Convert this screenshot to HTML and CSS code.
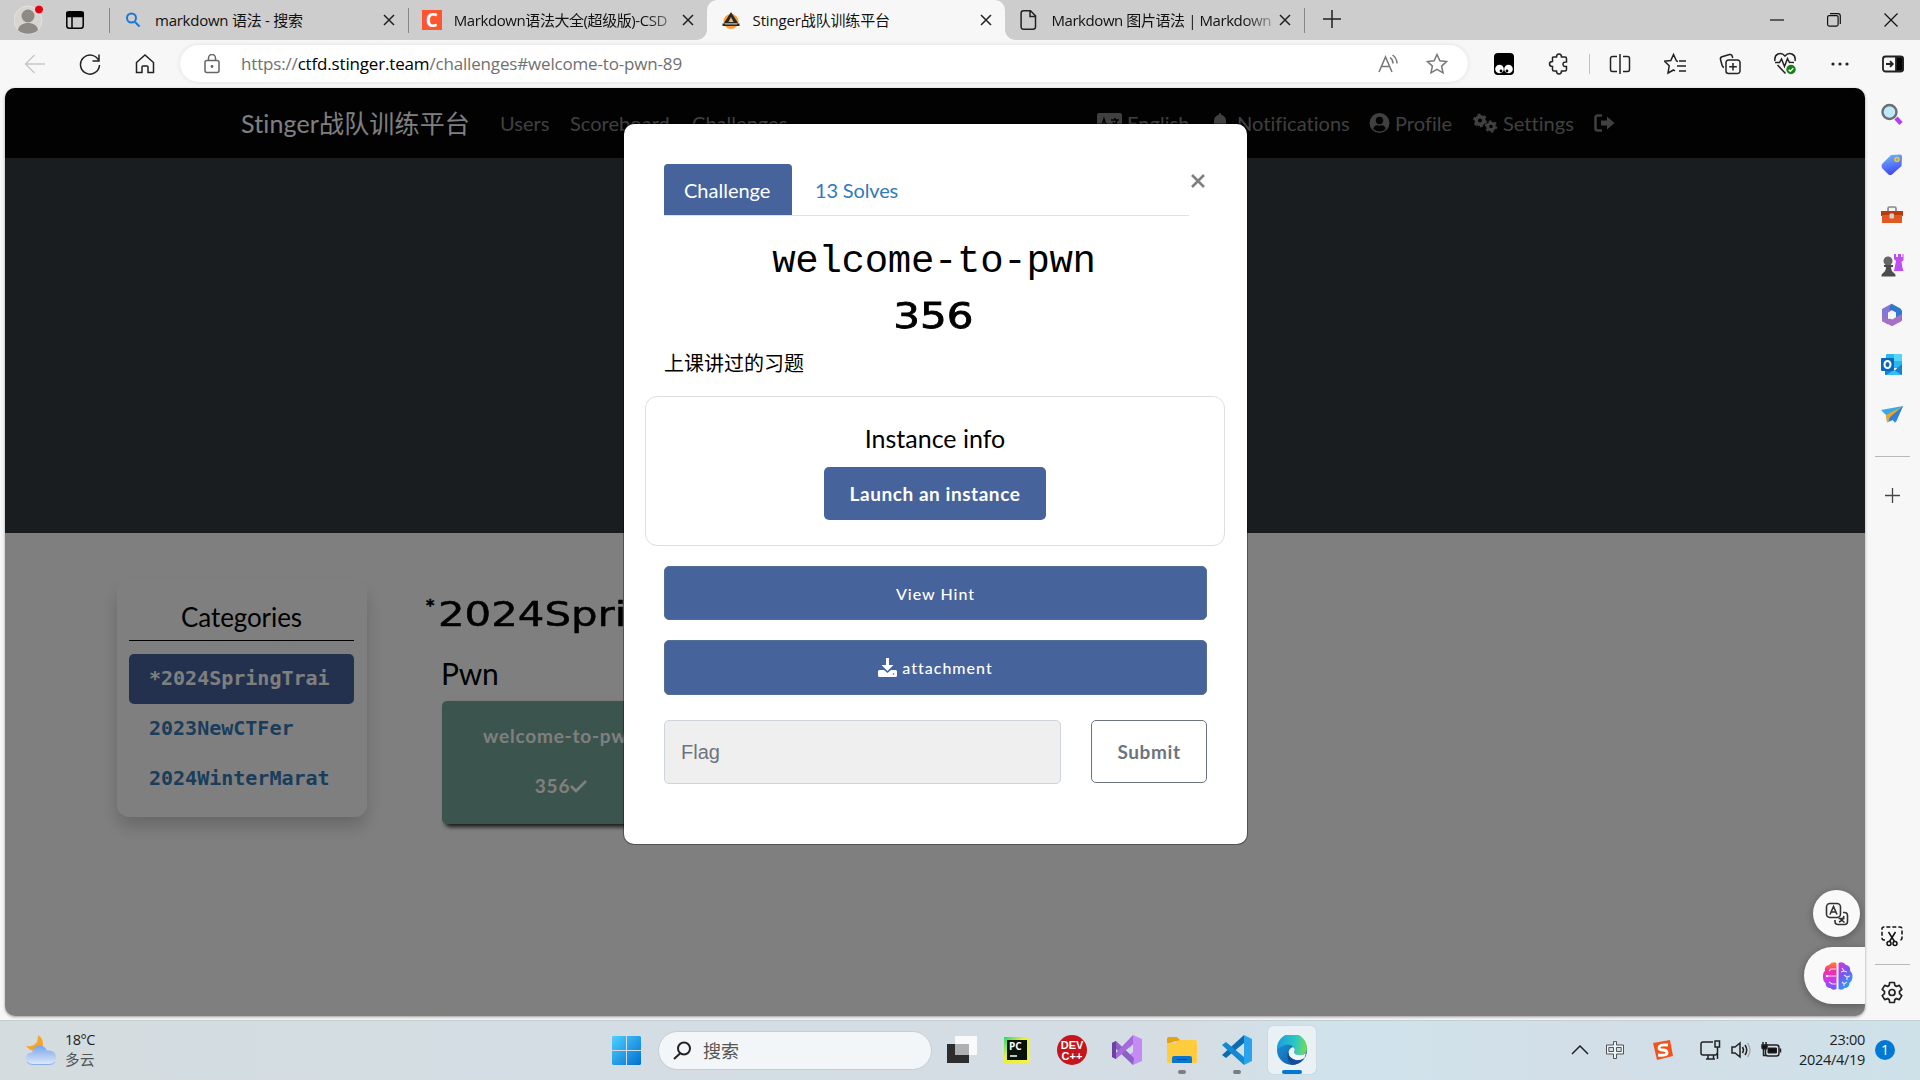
FILE: index.html
```html
<!DOCTYPE html>
<html lang="zh-CN">
<head>
<meta charset="utf-8">
<title>Stinger战队训练平台</title>
<link rel="stylesheet" href="styles.css">
</head>
<body>
<header class="tabbar">
  <svg class="avatar" width="30" height="30" viewBox="0 0 30 30"><circle cx="14" cy="15" r="14" fill="#d8d4cf" stroke="#e6e2dd"/><circle cx="14" cy="11" r="6.500" fill="#8d8985"/><path d="M4 25c1-5 5-7 10-7s9 2 10 7c-5 5-15 5-20 0z" fill="#8d8985"/><circle cx="25" cy="4.500" r="4.500" fill="#e3000f" stroke="#f3e5e5"/></svg>
  <svg class="workspaces" width="18" height="18" viewBox="0 0 18 18" fill="none" stroke="#000" stroke-width="1.500"><rect x=".8" y=".8" width="16.400" height="16.400" rx="2.500"/><path d="M1 1.500h16v4H1z" fill="#000"/><path d="M6 5v12"/></svg>
  <div class="tab divided">
    <svg class="fav" width="20" height="20" viewBox="0 0 20 20" fill="none" stroke="#1a78d0" stroke-width="2"><circle cx="8.500" cy="8" r="4.500"/><path d="m12 12 4.500 4.500"/></svg>
    <span class="tab-title t1">markdown 语法 - 搜索</span>
    <svg class="close" width="12" height="12" viewBox="0 0 12 12"><path d="m1 1 10 10M11 1 1 11"/></svg>
  </div>
  <div class="tab divided">
    <span class="fav csdn">C</span>
    <span class="tab-title fade">Markdown语法大全(超级版)-CSD</span>
    <svg class="close" width="12" height="12" viewBox="0 0 12 12"><path d="m1 1 10 10M11 1 1 11"/></svg>
  </div>
  <div class="tab active">
    <svg class="fav" width="20" height="20" viewBox="0 0 20 20"><circle cx="10" cy="11.500" r="7.500" fill="#ff9d2e"/><path d="m10 2 7 11H3z" fill="#26282c"/><path d="m10 7 2.500 5h-5z" fill="#f5b565"/><path d="M1.500 13.500h17v2.500h-17z" fill="#26282c"/><path d="M4 14h12" stroke="#ddd" stroke-width=".8"/></svg>
    <span class="tab-title t3">Stinger战队训练平台</span>
    <svg class="close" width="12" height="12" viewBox="0 0 12 12"><path d="m1 1 10 10M11 1 1 11"/></svg>
  </div>
  <div class="tab">
    <svg class="fav" width="20" height="20" viewBox="0 0 20 20" fill="none" stroke="#222" stroke-width="1.500"><path d="M4.500.8h7l5 5v11a2.400 2.400 0 0 1-2.400 2.400H4.500A2.400 2.400 0 0 1 2.100 17V3.200A2.400 2.400 0 0 1 4.500.8zM11 1v5.500h5.500"/></svg>
    <span class="tab-title fade">Markdown 图片语法 | Markdown</span>
    <svg class="close" width="12" height="12" viewBox="0 0 12 12"><path d="m1 1 10 10M11 1 1 11"/></svg>
  </div>
  <div class="newtab"><svg width="18" height="18" viewBox="0 0 18 18" stroke="#222" stroke-width="1.500"><path d="M9 0v18M0 9h18"/></svg></div>
  <div class="window-buttons">
    <svg width="14" height="14" viewBox="0 0 14 14"><path d="M0 7h14"/></svg>
    <svg width="14" height="14" viewBox="0 0 14 14"><rect x=".6" y="2.600" width="10.500" height="10.500" rx="1.500"/><path d="M3 .7h8a2.300 2.300 0 0 1 2.300 2.300v8"/></svg>
    <svg width="14" height="14" viewBox="0 0 14 14"><path d="m.5.5 13 13m0-13-13 13"/></svg>
  </div>
</header>

<div class="toolbar">
  <svg class="back" width="22" height="22" viewBox="0 0 22 22" stroke="#c8c8c8"><path d="M21 11H2m8.500-9L1.500 11l9 9"/></svg>
  <svg class="reload" width="22" height="22" viewBox="0 0 22 22"><path d="M20 8.500A9.500 9.500 0 1 0 20.500 12M20 1.500V8h-6.500"/></svg>
  <svg class="home" width="20" height="20" viewBox="0 0 20 20"><path d="M1.500 8.500 10 1l8.500 7.500V18.500H13V13q0-1-1-1H8q-1 0-1 1v5.500H1.500z"/></svg>
  <div class="address">
    <svg class="lock" width="16" height="20" viewBox="0 0 16 20" stroke="#666"><rect x="1" y="6.500" width="14" height="12" rx="2"/><path d="M4.500 6.500V4a3.500 3.500 0 0 1 7 0v2.500"/><circle cx="8" cy="12.500" r=".7" fill="#666"/></svg>
    <span class="url">https://<b>ctfd.stinger.team</b>/challenges#welcome-to-pwn-89</span>
    <svg class="read" width="22" height="20" viewBox="0 0 22 20" stroke="#777"><path d="M1 18 7.500 3 14 18M3.500 12.500h8M12 3.500q3 2 3 6M14.500 1q4.500 3 4.500 8.500"/></svg>
    <svg class="star" width="22" height="22" viewBox="0 0 22 22" stroke="#777"><path d="m11 1.500 2.900 6.200 6.700.8-5 4.600 1.400 6.700-6-3.400-6 3.400 1.400-6.700-5-4.600 6.700-.8z"/></svg>
  </div>
  <div class="tools">
    <svg width="22" height="22" viewBox="0 0 22 22"><rect x="1" y="0" width="20" height="22" rx="4" fill="#000" stroke="none"/><circle cx="6.500" cy="16" r="4.300" fill="#fff" stroke="none"/><circle cx="15.500" cy="16" r="4.300" fill="#fff" stroke="none"/><circle cx="8" cy="18" r="1.400" fill="#000" stroke="none"/><circle cx="14" cy="18" r="1.400" fill="#000" stroke="none"/></svg>
    <svg width="22" height="22" viewBox="0 0 22 22"><path d="M6 4h2.500Q8.500 1 11 1t2.500 3H17q1.500 0 1.500 1.500V9q-3.500-.3-3.500 2.200t3.500 2.300v3q0 1.500-1.500 1.500h-3.500q0 3-2.500 3t-2.500-3H6q-1.500 0-1.500-1.500v-3q-3 0-3-2.500t3-2.500v-4Q4.500 4 6 4z"/></svg>
    <span class="tool-divider"></span>
    <svg width="22" height="22" viewBox="0 0 22 22"><path d="M11 1v20M8 3.500H3.500A2 2 0 0 0 1.500 5.500v11a2 2 0 0 0 2 2H8M14 3.500h4.500a2 2 0 0 1 2 2v11a2 2 0 0 1-2 2H14"/></svg>
    <svg width="22" height="22" viewBox="0 0 22 22"><path d="m14 8.500-1.500-.5L9.500 1.500l-2.700 6-6.300.8 4.700 4.500L4 20l5.500-3 1.500 1M15 8h7M13 13h9M15 18h7"/></svg>
    <svg width="22" height="22" viewBox="0 0 22 22"><path d="M5 14.500Q3.500 14 3 12L1.500 6.500Q1 4.500 3 3.800L10.500 1.500q2-.5 2.700 1.500l.5 2M9.500 7h9a2.500 2.500 0 0 1 2.500 2.500v8.500a2.500 2.500 0 0 1-2.500 2.500h-9A2.500 2.500 0 0 1 7 18V9.500A2.500 2.500 0 0 1 9.500 7zM14 10v7.500M10.200 13.800h7.600"/></svg>
    <svg width="22" height="23" viewBox="0 0 22 23"><path d="M1 9Q0 4 4 2q4-1.500 7 2 3-3.500 7-2 4 2 3 7M3.500 13l7.500 8 1-1M1 10.500h4.500l2-3.500 3 7.500 3-8 2 4H20"/><circle cx="17" cy="17.500" r="5.500" fill="#158017" stroke="#f7f7f7"/><path d="m14.700 17.700 1.600 1.600 3-3" stroke="#fff"/></svg>
    <svg width="22" height="22" viewBox="0 0 22 22" stroke="none"><circle cx="4" cy="11" r="1.600" fill="#222"/><circle cx="11" cy="11" r="1.600" fill="#222"/><circle cx="18" cy="11" r="1.600" fill="#222"/></svg>
    <svg width="22" height="22" viewBox="0 0 22 22" stroke-width="1.800"><rect x="1" y="3.500" width="20" height="15" rx="2.500"/><path d="M14 4h5q2 0 2 2v10q0 2-2 2h-5z" fill="#000"/><path d="M4 11h6.500M8 8.200l2.800 2.800L8 13.800"/></svg>
  </div>
</div>

<div class="workspace">
  <main class="page">
    <nav class="site-nav">
      <span class="brand">Stinger战队训练平台</span>
      <span class="link users">Users</span><span class="link score">Scoreboard</span><span class="link chal">Challenges</span>
      <svg class="lang-icon" width="25" height="20" viewBox="0 0 25 20"><rect width="25" height="20" rx="2" fill="#808080"/><path d="m4 15 3-9 3 9M5 12h4M14 7h8M18 5v2M15 14q4-2 5-7M16 9q2 4 5 5" stroke="#050505" stroke-width="1.600" fill="none"/></svg>
      <span class="link english">English</span>
      <svg class="bell" width="18" height="20" viewBox="0 0 18 20"><path d="M9 0q1.300 0 1.300 1.700Q15 3 15 8q0 5 2.500 6.500v1.500H.5v-1.500Q3 13 3 8q0-5 4.700-6.300Q7.700 0 9 0zM6.500 17.500h5Q11 20 9 20t-2.500-2.500z" fill="#808080"/></svg>
      <span class="link notif">Notifications</span>
      <svg class="person" width="21" height="20" viewBox="0 0 20 20"><circle cx="10" cy="10" r="10" fill="#808080"/><circle cx="10" cy="7.500" r="3.700" fill="#050505"/><path d="M3.800 16q1-4 4-3.700 2.200.8 4.400 0 3-.3 4 3.700-6 5-12.400 0z" fill="#050505"/></svg>
      <span class="link profile">Profile</span>
      <svg class="gears" width="26" height="20" viewBox="0 0 26 20" fill="none" stroke="#808080"><circle cx="8" cy="7.500" r="3.800" stroke-width="3.400"/><circle cx="8" cy="7.500" r="5.900" stroke-width="2" stroke-dasharray="3 3.180"/><circle cx="19" cy="13.500" r="3.300" stroke-width="3"/><circle cx="19" cy="13.500" r="5.200" stroke-width="2" stroke-dasharray="2.500 2.940"/></svg>
      <span class="link settings">Settings</span>
      <svg class="logout" width="21" height="18" viewBox="0 0 21 18"><path d="M8 1.500H3.500a2 2 0 0 0-2 2v11a2 2 0 0 0 2 2H8" fill="none" stroke="#808080" stroke-width="2.500"/><path d="M7 6.500h6V2.500L20.500 9 13 15.500v-4H7z" fill="#808080"/></svg>
    </nav>
    <section class="hero"></section>
    <section class="board">
      <aside class="categories">
        <h2>Categories</h2>
        <a class="cat current">*2024SpringTrai</a>
        <a class="cat">2023NewCTFer</a>
        <a class="cat">2024WinterMarat</a>
      </aside>
      <div class="challenges">
        <h1><span class="mark">*</span><span class="wide">2024SpringTraining</span></h1>
        <h3>Pwn</h3>
        <div class="challenge"><p>welcome-to-pwn</p><p>356<svg width="17" height="14" viewBox="0 0 17 14"><path d="m1 7 5 5L16 2" fill="none" stroke="#fff" stroke-width="2.700"/></svg></p></div>
      </div>
    </section>
    <div class="backdrop"></div>
    <div class="modal">
      <div class="modal-head">
        <div class="modal-tabs"><span class="modal-tab on">Challenge</span><span class="modal-tab">13 Solves</span></div>
        <svg class="dismiss" width="14" height="14" viewBox="0 0 14 14"><path d="m1 1 12 12M13 1 1 13" stroke="#808080" stroke-width="2.600"/></svg>
      </div>
      <div class="name">welcome-to-pwn</div>
      <div class="points"><span>356</span></div>
      <p class="desc">上课讲过的习题</p>
      <div class="instance"><h4>Instance info</h4><button class="launch">Launch an instance</button></div>
      <button class="bar hint">View Hint</button>
      <button class="bar file"><svg width="19" height="19" viewBox="0 0 19 19" fill="#fff"><path d="M8 0h3v7h4.500l-6 6-6-6H8zM1.500 12H6l3.500 3 3.500-3h4.500q1.500 0 1.500 1.500v4q0 1.500-1.500 1.500h-16Q0 19 0 17.500v-4Q0 12 1.500 12z"/><circle cx="15.500" cy="16" r=".8" fill="#46639c"/></svg><span>attachment</span></button>
      <div class="submit-row"><div class="flag">Flag</div><button class="submit">Submit</button></div>
    </div>
    <div class="float translate"><svg width="24" height="24" viewBox="0 0 24 24" fill="none" stroke="#333" stroke-width="1.600"><rect x="1.500" y="1.500" width="14" height="14" rx="3.500"/><path d="m5 12.500 3.500-8 3.500 8M6.200 10h4.600M18 10.500h1.500a3 3 0 0 1 3 3v6a3 3 0 0 1-3 3h-6.500a3 3 0 0 1-3-3V18M14 20q4-1.500 5-6M13.500 16.500h6M15.500 17l4 3.500"/></svg></div>
    <div class="float brain"><svg width="31" height="28" viewBox="0 0 31 28"><defs><linearGradient id="bl" x1="0" y1="0" x2="0" y2="1"><stop stop-color="#ff8a20"/><stop offset=".3" stop-color="#f2309c"/><stop offset=".6" stop-color="#d336e8"/><stop offset="1" stop-color="#6560f6"/></linearGradient><linearGradient id="br" x1="0" y1="0" x2=".5" y2="1"><stop stop-color="#dc32dd"/><stop offset=".5" stop-color="#7459ef"/><stop offset="1" stop-color="#269fff"/></linearGradient></defs><path d="M14.500 1v26q-4 2-6-1-5 0-5-5-3-2-2.500-7Q1 10 3 9q-1-5 4-6 3-4 7.500-2z" fill="url(#bl)"/><path d="M16.500 1v26q4 2 6-1 5 0 5-5 3-2 3-7-.5-4-2.500-5 1-5-4-6-3-4-7.500-2z" fill="url(#br)"/><path d="M14 7H9L7 9M14 14H5M14 22h-4l-3-2M20 6l2 3 3 1M22 9l-3 1M22 13l3 2 3-1M25 15v3M20 20l2 2 3-2M22 22v2" fill="none" stroke="#fff" stroke-width="1.200" opacity=".8"/><circle cx="5" cy="14" r="1.300" fill="#fff"/></svg></div>
  </main>

  <aside class="edge-bar">
    <svg width="24" height="24" viewBox="0 0 24 24"><circle cx="9.500" cy="9" r="7" fill="#bfe8fb" stroke="#6c6f72" stroke-width="2.400"/><path d="m16 15 5 5.500" stroke="#b93df0" stroke-width="4.500"/></svg>
    <svg width="24" height="24" viewBox="0 0 24 24"><defs><linearGradient id="tg" x1=".3" y1="0" x2=".6" y2="1"><stop stop-color="#6fb5fa"/><stop offset="1" stop-color="#4041f2"/></linearGradient></defs><path d="m11 2 9.500-.5q2 .5 1.500 2.500l-.5 9-9.500 8.500q-2 1-3.500 0L2 15q-1-2 0-4z" fill="url(#tg)"/><circle cx="17" cy="6.500" r="2" fill="#6aa8f0" stroke="#f7c81c" stroke-width="1.600"/></svg>
    <svg width="24" height="24" viewBox="0 0 24 24"><path d="M8 8V5.500Q8 4 9.500 4h5Q16 4 16 5.500V8" fill="none" stroke="#888" stroke-width="1.700"/><path d="M1 8h22v5H1z" fill="#b93b0b"/><path d="M2 12h20v8H2z" fill="#e25820"/><rect x="9.500" y="10.500" width="4.500" height="5" rx="1" fill="#cfd2d4"/></svg>
    <svg width="24" height="24" viewBox="0 0 24 24"><path d="M14 1h2v3h2V1h3v3h1.500V1h1v6l-2 2 1 6 1 3H14l2-10-2-2z" fill="#c04cf2"/><circle cx="8" cy="8" r="4.500" fill="#666"/><path d="M4 12h9v2h-2q0 4 3 6 2 1 1.500 3.500h-14Q1 21 3 20q3-2 3-6H4z" fill="#4c4c4c"/></svg>
    <svg width="24" height="24" viewBox="0 0 24 24"><path d="M11.500.8 2 6v12l6 3.500V10l8-6z" fill="#8476d4"/><path d="m11.500.8 9 4.700L22 8v10l-6-4V9.500L9 6z" fill="#2f77d1"/><path d="m22 14-1 4.500-9 4.700-10-5.200v-4l6 2 8-2 6-3z" fill="#a670c6"/><path d="m12 7.500 4 2.200v4.600l-4 2.200-4-2.200V9.700z" fill="#f7f7f7"/></svg>
    <svg width="24" height="24" viewBox="0 0 24 24"><rect x="6" y="1" width="16" height="14" rx="1" fill="#2ab7f2"/><path d="M14 1h8v7h-8z" fill="#56d4fa"/><path d="m5 13 9 5 8-7v11H5z" fill="#1183d0"/><path d="m14 17 8 5H6z" fill="#35bdf4"/><rect x="1" y="5" width="13" height="13" rx="1" fill="#0868bd"/><ellipse cx="7.500" cy="11.500" rx="3" ry="3.600" fill="none" stroke="#fff" stroke-width="2"/></svg>
    <svg width="24" height="24" viewBox="0 0 24 24"><path d="m1 7 22-4-8 17-5-6-3 4-1-6z" fill="#35a9ec"/><path d="M23 3 6 12l1 8 4-6z" fill="#f2a324"/><path d="m23 3-13 11-2 5 5-2 3 2z" fill="#2f82da"/></svg>
    <hr class="rule">
    <svg class="add" width="15" height="15" viewBox="0 0 15 15" stroke="#444" stroke-width="1.300"><path d="M7.500 0v15M0 7.500h15"/></svg>
    <svg class="snip" width="24" height="22" viewBox="0 0 24 22" fill="none" stroke="#111" stroke-width="1.500"><path d="M5 15H4q-2 0-2-2V4q0-2 2-2h16q2 0 2 2v9q0 2-2 2h-1" stroke-dasharray="4 2"/><path d="m8.500 7 6 9.500M15.500 7l-6 9.500"/><circle cx="9" cy="18.500" r="2"/><circle cx="15" cy="18.500" r="2"/></svg>
    <hr class="rule low">
    <svg width="24" height="24" viewBox="0 0 24 24" fill="none" stroke="#222" stroke-width="1.700" stroke-linejoin="round"><path d="M9.700 1.500h4.600l.6 3 1.500.9 2.900-1 2.500 4-2.300 2v2.200l2.300 2-2.500 4-2.900-1-1.500.9-.6 3H9.700l-.6-3-1.500-.9-2.900 1-2.500-4 2.300-2v-2.200l-2.300-2 2.500-4 2.900 1 1.500-.9z"/><circle cx="12" cy="11.500" r="3"/></svg>
  </aside>
</div>

<footer class="taskbar">
  <svg class="weather" width="30" height="30" viewBox="0 0 30 30"><defs><linearGradient id="cl" x1="0" y1="0" x2="0" y2="1"><stop stop-color="#79a3e8"/><stop offset="1" stop-color="#dceafb"/></linearGradient></defs><path d="M12 0q5 3 5 9 0 8-9 7-5-1-8-5 8 1 11-4 1-3 1-7z" fill="#f6a526"/><path d="M7 29.500q-7 0-7-6t6-6Q8 10 14 10.500q5 .5 7 5 9-1 9 7 0 7-7 7z" fill="url(#cl)"/><path d="M1 27q2 2.500 6 2.500h16q4 0 6-2.500" fill="none" stroke="#8baced"/></svg>
  <div class="weather-text"><span>18°C</span><span class="sky">多云</span></div>
  <svg class="start" width="29" height="29" viewBox="0 0 29 29"><defs><linearGradient id="wn" x1="0" y1="0" x2="1" y2="1"><stop stop-color="#4fd0ff"/><stop offset="1" stop-color="#006fd0"/></linearGradient></defs><path d="M1 0h13v14H0V1zM15 0h13l1 1v13H15zM0 15h14v14H1l-1-1zM15 15h14v13l-1 1H15z" fill="url(#wn)"/></svg>
  <div class="search"><svg width="19" height="19" viewBox="0 0 19 19" fill="none" stroke="#222" stroke-width="2"><circle cx="11" cy="7.500" r="6"/><path d="m7 12.500-6 5.500"/></svg><span>搜索</span></div>
  <div class="apps">
    <div class="app"><svg width="30" height="30" viewBox="0 0 30 30"><path d="M0 9h22v19H0z" fill="#2d2d2d"/><rect x="8" y="1" width="22" height="19" rx="1" fill="#fafafa"/><path d="M8 9h14v11H8z" fill="#aeb0b1"/></svg></div>
    <div class="app"><svg width="28" height="28" viewBox="0 0 28 28"><defs><linearGradient id="pc" x1="0" y1="0" x2="1" y2="1"><stop stop-color="#17dc7b"/><stop offset=".4" stop-color="#e9ef37"/><stop offset="1" stop-color="#f3f04c"/></linearGradient></defs><path d="M1 1h26v26H1z" fill="url(#pc)"/><path d="M4 4h20v20H4z" fill="#07130a"/><text class="pc" x="6" y="14">PC</text><path d="M7 20h7" stroke="#fff" stroke-width="1.500"/></svg></div>
    <div class="app"><svg width="30" height="30" viewBox="0 0 30 30"><circle cx="15" cy="15" r="15" fill="#c4161c"/><text class="dev" x="15" y="14">DEV</text><text class="dev" x="15" y="25">C++</text></svg></div>
    <div class="app"><svg width="30" height="30" viewBox="0 0 30 30"><path d="m21 0 9 4v22l-9 4-6-8 6-5V9l-4 5z" fill="#c48bf4"/><path d="m0 8 4-2 18 17-1 7L4 14v8l-4-2z" fill="#8961c7"/><path d="M0 22 21 0v9L4 24z" fill="#a36bdc"/><path d="m0 8 4-2v18l-4-2z" fill="#6b439f"/></svg></div>
    <div class="app open"><svg width="30" height="30" viewBox="0 0 30 30"><path d="M0 4q0-2 2-2h8l4 4H9L0 9z" fill="#e8a20d"/><path d="M0 8h8l4-3h16q2 0 2 2v19q0 2-2 2H2q-2 0-2-2z" fill="#ffcc3e"/><path d="M5 28v-5q0-2 2-2h16q2 0 2 2v5z" fill="#0c76cf"/><path d="M10 24.500h10" stroke="#0a4f95"/></svg></div>
    <div class="app open"><svg width="30" height="30" viewBox="0 0 30 30"><path d="M22 0v8L4 23l-4-3z" fill="#0a6cb1"/><path d="M0 10 4 7l18 15v8z" fill="#1488d0"/><path d="m22 0 8 4v22l-8 4z" fill="#29a4ec"/></svg></div>
    <div class="app open selected"><svg width="30" height="30" viewBox="0 0 30 30"><defs><linearGradient id="eg" x1="0" y1=".4" x2="1" y2=".5"><stop stop-color="#199de0"/><stop offset=".6" stop-color="#2bc8c3"/><stop offset="1" stop-color="#74da56"/></linearGradient><linearGradient id="eb" x1="0" y1="0" x2="1" y2="1"><stop stop-color="#1b9de2"/><stop offset="1" stop-color="#0d4e9c"/></linearGradient></defs><circle cx="15" cy="15" r="15" fill="url(#eb)"/><path d="M0 14A15 15 0 0 1 30 13q0 7-7 7-6 0-6-3 2-2 0-5-6-6-17 2z" fill="url(#eg)"/><path d="M16 12q3 2 1 5 0 3 6 3 4 0 6-2l-1.500 5q-4 3-9 2-7-2-7-8 1-4 4.500-5z" fill="#eef5f8"/><path d="M11 16q0 8 9 9.500 4 0 7-2-5 6.500-12 6.500-6-4-4-14z" fill="#144c96"/></svg></div>
  </div>
  <div class="tray">
    <svg class="chev" width="18" height="10" viewBox="0 0 18 10"><path d="m1 9 8-8 8 8"/></svg>
    <svg class="ime" width="18" height="18" viewBox="0 0 18 18"><path d="M7.500.6h3V4h7v9h-7v4.500h-3V13h-7V4h7zM2.800 6.500v4h4.700v-4zM10.500 6.500v4h4.700v-4z" stroke="#444" stroke-width=".9" fill="#eef3f5" fill-rule="evenodd"/></svg>
    <svg class="sogou" width="20" height="20" viewBox="0 0 20 20"><path d="M0 3 17 0l3 16-16 4z" fill="#f2531d" stroke="none"/><path d="M15 5Q6 4 6 8q0 2 4 2t4 3q0 3-9 2" stroke="#fff" stroke-width="2.800"/></svg>
    <svg class="net" width="21" height="20" viewBox="0 0 21 20"><path d="M13 2H3Q1 2 1 4v9q0 2 2 2h12q2 0 2-2M6 19h9M8 15v4M13.500 15v4"/><path d="M15 1h4.500v6H15zM17.500 7v12" /></svg>
    <svg class="sound" width="20" height="18" viewBox="0 0 20 18"><path d="M1 6h3l5-4v14l-5-4H1zM11.500 6q2 3 0 6M14 4q3.500 5 0 10"/><path d="M16.500 2q5 7 0 14" stroke="#aaa"/></svg>
    <svg class="battery" width="21" height="18" viewBox="0 0 21 18"><rect x="4.500" y="4" width="13.500" height="11" rx="2.500"/><path d="M7 7h8.500v5H7z" fill="#111" stroke-width="1"/><path d="M19.500 7.500v4M2 1v3M5 1v3M2.500 8v6.500H5"/><path d="M1 4h5v2.500Q6 8 3.500 8T1 6.500z" fill="#111"/></svg>
    <div class="clock"><span>23:00</span><span>2024/4/19</span></div>
    <span class="count">1</span>
  </div>
</footer>
</body>
</html>
```
FILE: styles.css
```css
* { box-sizing: border-box; }
body { margin: 0; width: 1920px; height: 1080px; overflow: hidden; display: flex; flex-direction: column; background: #f7f7f7; color: #111; font-family: "Open Sans", "Noto Sans CJK SC", sans-serif; }
svg { flex: none; display: block; }
h1, h2, h3, h4, p { margin: 0; font-weight: inherit; }
button { font-family: Lato, sans-serif; border: 0; padding: 0; }

.tabbar { height: 40px; flex: none; display: flex; align-items: center; background: #cdcdcd; }
.avatar { margin-left: 14px; }
.workspaces { margin: 0 25px 0 22px; }
.tab { width: 298.800px; height: 40px; padding: 0 13px 0 14px; display: flex; align-items: center; position: relative; }
.divided::before, .newtab::before { content: ""; position: absolute; left: 0; top: 8px; width: 1px; height: 25px; background: #888; }
.fav { width: 20px; height: 20px; margin-right: 12px; flex: none; }
.csdn { background: #fc5531; color: #fff; font: 700 19px/20px "Open Sans", sans-serif; text-align: center; }
.tab-title { flex: 1; font-size: 15px; line-height: 22px; margin-top: -1px; white-space: nowrap; letter-spacing: -.42px; }
.t1 { letter-spacing: -.25px; }
.t3 { letter-spacing: -.15px; }
.fade { margin-right: 4px; mask-image: linear-gradient(90deg, #000 86%, rgba(0,0,0,.2) 100%); }
.close { fill: none; stroke: #222; stroke-width: 1.500; }
.active { background: #f7f7f7; border-radius: 10px 10px 0 0; }
.active::before, .active::after { content: ""; position: absolute; bottom: 0; width: 10px; height: 10px; }
.active::before { left: -10px; background: radial-gradient(circle at 0 0, transparent 9.500px, #f7f7f7 10px); }
.active::after { right: -10px; background: radial-gradient(circle at 100% 0, transparent 9.500px, #f7f7f7 10px); }
.newtab { position: relative; height: 40px; padding: 10px 0 0 19px; }
.window-buttons { margin-left: auto; margin-right: 22px; display: flex; gap: 43px; fill: none; stroke: #111; stroke-width: 1.200; }

.toolbar { height: 48px; flex: none; display: flex; align-items: center; padding-bottom: 1px; fill: none; stroke: #222; stroke-width: 1.500; }
.back { margin-left: 24px; }
.reload { margin-left: 33px; }
.home { margin-left: 34px; }
.address { margin-left: 25px; width: 1288px; height: 37px; border-radius: 19px; background: #fff; box-shadow: 0 0 4px #ddd; display: flex; align-items: center; }
.lock { margin-left: 24px; }
.url { margin-left: 21px; flex: 1; font-size: 17px; color: #707070; white-space: nowrap; letter-spacing: -.17px; }
.url b { color: #000; font-weight: 400; }
.read { margin-right: 26px; }
.star { margin-right: 20px; }
.tools { margin-left: 25px; display: flex; align-items: center; gap: 33px; }
.tool-divider { width: 1px; height: 20px; background: #c4c4c4; margin: 0 -14px; }
.tools svg:last-child { margin-left: -2px; }

.workspace { height: 932px; flex: none; display: flex; }
.page { position: relative; width: 1860px; height: 928px; margin-left: 5px; border-radius: 10px; overflow: hidden; background: #fff; box-shadow: 0 1px 3px #999; color: #000; font-family: Lato, "Noto Sans CJK SC", sans-serif; font-weight: 400; }
.site-nav { height: 70px; background: #040404; display: flex; align-items: center; padding-left: 236px; }
.brand { width: 259px; font-size: 25px; color: #fff; white-space: nowrap; letter-spacing: .15px; margin-top: -2px; }
.link { font-size: 20px; color: #808080; white-space: nowrap; letter-spacing: .03px; }
.users { width: 70px; }
.score { width: 122px; }
.chal { width: 405px; }
.lang-icon { margin-right: 5px; }
.english { width: 84px; }
.bell { margin-right: 8px; }
.notif { width: 132px; }
.person { margin-right: 5px; }
.profile { width: 77px; }
.gears { margin-right: 5px; }
.settings { width: 91px; }
.hero { height: 375px; background: #343a40; }
.board { display: flex; padding: 47px 0 0 112px; }
.categories { width: 250px; height: 237px; padding: 18px 13px 0 12px; border-radius: 12px; box-shadow: 0 10px 18px -1px rgba(0,0,0,.2); }
.categories h2 { height: 43px; border-bottom: 1px solid #000; margin-bottom: 13px; font-size: 26px; line-height: 38px; text-align: center; letter-spacing: -.1px; }
.cat { display: block; height: 50px; padding-left: 20px; color: #337ab7; font: 700 20px/49px "DejaVu Sans Mono", monospace; border-radius: 5px; white-space: nowrap; }
.current { background: #46639c; color: #fff; }
.challenges { padding-left: 59px; }
.challenges h1 { display: flex; height: 64px; font: 400 34px/68px "DejaVu Sans", sans-serif; -webkit-text-stroke: .5px #000; }
.mark { width: 12px; font-size: 16px; line-height: 52px; font-weight: 700; }
.wide { display: inline-block; transform: scaleX(1.230); transform-origin: 0 50%; }
.challenges h3 { padding-left: 15px; height: 57px; font-size: 30px; line-height: 59px; letter-spacing: -.3px; }
.challenge { width: 248px; height: 123px; margin-left: 16px; padding-top: 10px; border-radius: 5px; background: #77a89a; color: #fff; box-shadow: 3px 3px 4px #333; font-size: 19px; font-weight: 700; letter-spacing: .8px; line-height: 50px; padding-right: 10px; }
.challenge p { display: flex; justify-content: center; align-items: center; height: 50px; }
.backdrop { position: absolute; inset: 0; background: rgba(0,0,0,.5); }

.modal { position: absolute; left: 619px; top: 36px; width: 623px; height: 720px; padding: 40px 40px 0; border-radius: 10px; background: #fff; box-shadow: 0 0 0 1px rgba(0,0,0,.35); display: flex; flex-direction: column; }
.modal-head { display: flex; height: 52px; flex: none; }
.modal-tabs { width: 525px; border-bottom: 1px solid #dee2e6; display: flex; }
.modal-tab { height: 51px; padding: 0 20px; line-height: 53px; font-size: 20px; color: #337ab7; margin-right: 3px; letter-spacing: -.15px; }
.on { width: 128px; background: #46639c; color: #fff; border-radius: 4px 4px 0 0; letter-spacing: 0; }
.dismiss { margin: 10px 0 0 2px; }
.name { height: 58px; margin-top: 17px; font: 39px/58px "Liberation Mono", monospace; text-align: center; white-space: nowrap; letter-spacing: -.3px; padding-right: 3px; }
.points { height: 52px; text-align: center; font: 35px/50px "DejaVu Sans", sans-serif; padding-right: 5px; -webkit-text-stroke: .8px #000; }
.points span { display: inline-block; transform: scaleX(1.200); }
.desc { height: 50px; font-size: 20px; line-height: 38px; padding-top: 1px; }
.instance { margin: 3px -19px 0; width: 580px; height: 150px; border: 1px solid #dfdfdf; border-radius: 12px; display: flex; flex-direction: column; align-items: center; flex: none; padding-top: 20px; }
.instance h4 { font-size: 25px; line-height: 42px; height: 50px; }
.launch { width: 222px; height: 53px; border-radius: 5px; background: #46639c; color: #fff; font-size: 19px; font-weight: 700; letter-spacing: .55px; }
.bar { flex: none; height: 54px; border-radius: 5px; background: #46639c; border: 1px solid #527094; color: #fff; font-size: 16px; font-weight: 500; letter-spacing: 1px; display: flex; align-items: center; justify-content: center; gap: 5px; }
.hint { margin-top: 20px; }
.file { margin-top: 20px; height: 55px; }
.submit-row { margin-top: 25px; display: flex; justify-content: space-between; }
.flag { width: 397px; height: 64px; border: 1px solid #ced4da; border-radius: 5px; background: #efefef; padding-left: 16px; font: 20px/62px "Liberation Sans", sans-serif; color: #6c757d; }
.submit { width: 116px; height: 63px; border: 1px solid #6c757d; border-radius: 5px; background: #fff; color: #6c757d; font-size: 19px; font-weight: 700; letter-spacing: .6px; }
.float { position: absolute; right: 0; display: flex; align-items: center; background: #f9f9f9; box-shadow: 0 2px 8px rgba(0,0,0,.3); }
.translate { right: 5px; top: 802px; width: 47px; height: 47px; border-radius: 50%; justify-content: center; }
.brain { top: 859px; width: 61px; height: 57px; border-radius: 29px 0 0 29px; padding-left: 18px; }

.edge-bar { width: 54px; display: flex; flex-direction: column; align-items: center; gap: 26px; padding-top: 15px; }
.rule { width: 35px; height: 1px; margin: 3px 0 0; border: 0; background: #b8b8b8; flex: none; }
.add { margin-top: 5px; }
.snip { margin-top: 396px; }
.low { margin-top: -9px; }
.low + svg { margin-top: -10px; }

.taskbar { height: 60px; flex: none; display: flex; align-items: center; background: linear-gradient(90deg, #d4dcdf, #d3dde4 40%, #d5dde3 62%, #cfe3ec 70%, #d3dee7 84%, #cee1e9); border-top: 1px solid #c4cfd4; padding-bottom: 1px; color: #222; }
.weather { margin-left: 26px; }
.weather-text { width: 547px; padding-left: 9px; font-size: 14.500px; display: flex; flex-direction: column; line-height: 20px; letter-spacing: -.5px; }
.sky { color: #555; letter-spacing: .5px; }
.start { margin-left: 9px; }
.search { width: 274px; height: 39px; margin-left: 17px; padding-left: 14px; border-radius: 20px; background: #f2f6f8; border: 1px solid #c7ced2; display: flex; align-items: center; gap: 11px; font-size: 18px; color: #555; }
.apps { display: flex; gap: 7px; margin-left: 6px; }
.app { width: 48px; height: 48px; display: flex; align-items: center; justify-content: center; position: relative; border-radius: 5px; }
.selected { background: #e9f1f5; box-shadow: 0 0 1px #9ab; }
.open::after { content: ""; position: absolute; bottom: 0; width: 8px; height: 4px; border-radius: 2px; background: #7b7e80; }
.selected::after { width: 20px; background: #0078d4; }
.pc { font: 700 10px "Open Sans", sans-serif; fill: #fff; }
.dev { font: 700 11px/8px "Liberation Sans", sans-serif; fill: #fff; text-anchor: middle; }
.tray { margin-left: auto; display: flex; align-items: center; fill: none; stroke: #222; stroke-width: 1.500; padding-right: 25px; }
.ime { margin-left: 17px; }
.sogou { margin-left: 29px; }
.net { margin-left: 27px; }
.sound { margin-left: 10px; }
.battery { margin-left: 10px; }
.clock { width: 83px; display: flex; flex-direction: column; text-align: right; font-size: 14.500px; line-height: 20px; letter-spacing: -.3px; }
.count { width: 20px; height: 20px; margin-left: 10px; border-radius: 50%; background: #0078d4; color: #fff; font-size: 14px; line-height: 20px; text-align: center; }
```
